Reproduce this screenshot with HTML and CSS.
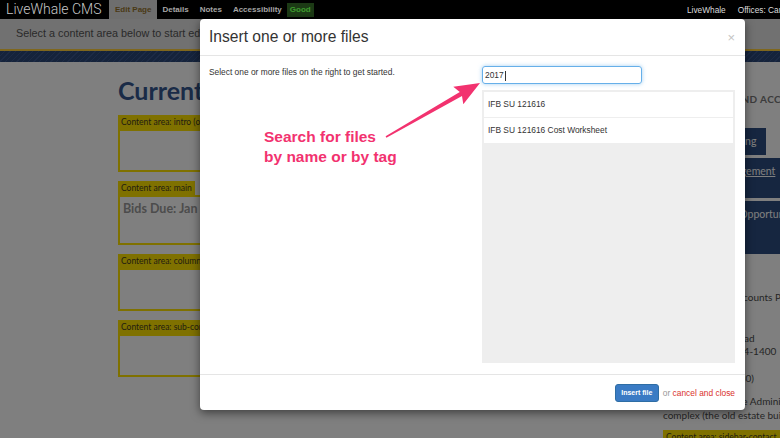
FILE: index.html
```html
<!DOCTYPE html>
<html lang="en">
<head>
    <meta charset="UTF-8">
    <title>Edit Page - LiveWhale CMS</title>
    <link rel="stylesheet" href="styles.css">
</head>
<body>
    <!-- CMS toolbar -->
    <div class="toolbar">
        <span class="brand">LiveWhale CMS</span>
        <nav class="tabs">
            <a class="tab active" href="#">Edit Page</a>
            <a class="tab" href="#">Details</a>
            <a class="tab" href="#">Notes</a>
            <a class="tab" href="#">Accessibility <span class="badge">Good</span></a>
        </nav>
        <div class="toolbar-right">
            <a href="#">LiveWhale</a>
            <a href="#">Offices: Campus Services</a>
        </div>
    </div>

    <!-- Page being edited -->
    <div class="page">
        <div class="hint-bar">Select a content area below to start editing.</div>
        <div class="band"></div>

        <div class="page-body">
            <main class="main-col">
                <h1>Current Bids</h1>
                <div class="areas">
                    <section class="area">
                        <div class="area-label">Content area: intro (optional)</div>
                        <div class="area-body"></div>
                    </section>
                    <section class="area">
                        <div class="area-label">Content area: main</div>
                        <div class="area-body tall"><p>Bids Due: Jan 24, 2017</p></div>
                    </section>
                    <section class="area">
                        <div class="area-label">Content area: column-sidebar</div>
                        <div class="area-body"></div>
                    </section>
                    <section class="area">
                        <div class="area-label">Content area: sub-content</div>
                        <div class="area-body"></div>
                    </section>
                </div>
            </main>

            <aside class="side-col">
                <h2 class="side-title">Purchasing and Accounts</h2>
                <nav class="side-nav">
                    <a class="short" href="#">About Purchasing</a>
                    <a class="current" href="#">Contract Management<br>Policy</a>
                    <a href="#">Upcoming Bid Opportunities<br>and Awards<br>2017</a>
                </nav>
                <p class="side-text">Purchasing and Accounts Payable<br>Room 100<br>Campus Box 17<br>11100 Campus Road<br>Telephone 443-334-1400<br>Mon&ndash;Fri<br>(Mon&ndash;Fri 8:30&ndash;4:30)</p>
                <p class="side-text">Purchasing is in the Administration<br>complex (the old estate building).</p>
                <div class="side-area">Content area: sidebar-contact</div>
            </aside>
        </div>
    </div>

    <div class="backdrop"></div>

    <!-- Insert files dialog -->
    <div class="modal">
        <div class="modal-header">
            <h3 class="modal-title">Insert one or more files</h3>
            <span class="close">&times;</span>
        </div>
        <div class="modal-body">
            <p class="modal-intro">Select one or more files on the right to get started.</p>
            <div class="picker">
                <div class="search">2017<span class="caret"></span></div>
                <ul class="file-list">
                    <li>IFB SU 121616</li>
                    <li>IFB SU 121616 Cost Worksheet</li>
                </ul>
            </div>
        </div>
        <div class="modal-footer">
            <button class="btn-primary" type="button">Insert file</button>
            <span class="or">or <a class="cancel" href="#">cancel and close</a></span>
        </div>
    </div>

    <!-- Annotation -->
    <svg class="callout-arrow" width="780" height="438" viewBox="0 0 780 438">
        <polygon points="385.6,136.3 459.8,92.1 453.3,86.8 480,83 463.3,104.2 462,95.9 386.4,137.7" fill="#f2326f"/>
    </svg>
    <div class="callout-text">Search for files<br>by name or by tag</div>
</body>
</html>
```

FILE: styles.css
```css
/* Base */
* {
    box-sizing: border-box;
}

body {
    margin: 0;
    width: 780px;
    height: 438px;
    overflow: hidden;
    position: relative;
    background: #fff;
    font-family: Lato, "Liberation Sans", sans-serif;
}

a {
    color: inherit;
    text-decoration: none;
}

/* Toolbar */
.toolbar {
    position: relative;
    z-index: 3;
    height: 19px;
    display: flex;
    padding-left: 6px;
    background: #000;
    font-family: "Liberation Sans", Arial, sans-serif;
    white-space: nowrap;
}

.brand {
    margin-right: 8px;
    font-family: Roboto, sans-serif;
    font-weight: 300;
    font-size: 14px;
    line-height: 19px;
    color: #c8c8c8;
}

.tabs {
    display: flex;
}

.tab {
    display: flex;
    align-items: center;
    padding: 0 5.5px;
    font-size: 8px;
    font-weight: bold;
    color: #a6a6a6;
}

.tab.active {
    background: #6e6e6e;
    color: #4a3914;
}

.badge {
    margin-left: 5px;
    padding: 2px 3px;
    line-height: 10px;
    background: #1c3a15;
    color: #3e9a2e;
}

.toolbar-right {
    margin-left: auto;
    width: 93px;
    overflow: hidden;
    display: flex;
    align-items: center;
    gap: 12px;
    font-size: 8.3px;
    color: #dcdcdc;
}

/* Page under the dialog */
.hint-bar {
    height: 30px;
    padding-left: 16px;
    background: #e2e2e2;
    font-family: "Liberation Sans", Arial, sans-serif;
    font-size: 10.8px;
    line-height: 29px;
    color: #555;
}

.band {
    height: 13px;
    border-top: 2px solid #ffcf3a;
    background: repeating-linear-gradient(135deg, #2a4676 0 3px, #38548a 3px 4px);
}

.page-body {
    display: flex;
}

.main-col {
    flex-shrink: 0;
    width: 520px;
    margin-left: 118px;
}

.main-col h1 {
    margin: 13px 0 0;
    font-size: 25px;
    line-height: 30px;
    font-weight: bold;
    color: #34578f;
}

.areas {
    margin-top: 10px;
}

.area {
    margin-bottom: 9px;
}

.area-label {
    width: max-content;
    padding: 0 3px;
    background: #ffe200;
    font-size: 8.5px;
    line-height: 14px;
    color: #454020;
}

.area-body {
    height: 43px;
    border: 2px solid #ffe200;
}

.area-body.tall {
    height: 50px;
    padding: 4px 3px;
}

.area-body p {
    margin: 0;
    font-size: 12.5px;
    font-weight: bold;
    line-height: 15px;
    color: #999;
}

.side-col {
    flex-shrink: 0;
    width: 140px;
    margin-left: 25px;
}

.side-title {
    margin: 30px 0 0;
    font-size: 10px;
    font-weight: bold;
    line-height: 14px;
    letter-spacing: 0.4px;
    text-transform: uppercase;
    color: #787878;
    white-space: nowrap;
}

.side-nav {
    margin-top: 22px;
}

.side-nav a {
    display: block;
    margin-bottom: 3px;
    padding: 7px 10px 7px 9px;
    background: #2c4c80;
    color: #fff;
    font-size: 10.5px;
    line-height: 13px;
    white-space: nowrap;
}

.side-nav a.short {
    width: max-content;
    padding-left: 12px;
}

.side-nav a.current {
    text-decoration: underline;
}

.side-text {
    margin: 37px 0 0;
    font-size: 10px;
    line-height: 13.5px;
    color: #4c4c4c;
    white-space: nowrap;
}

.side-text + .side-text {
    margin-top: 9.5px;
}

.side-area {
    margin-top: 8px;
    height: 14px;
    padding: 0 3px;
    background: #ffe200;
    font-size: 8.5px;
    line-height: 14px;
    color: #454020;
    white-space: nowrap;
}

.backdrop {
    position: absolute;
    top: 19px;
    left: 0;
    right: 0;
    bottom: 0;
    z-index: 2;
    background: rgba(0, 0, 0, 0.5);
}

/* Dialog */
.modal {
    position: absolute;
    left: 200px;
    top: 19px;
    z-index: 4;
    width: 545px;
    height: 391px;
    display: flex;
    flex-direction: column;
    background: #fff;
    border-radius: 4px;
    box-shadow: 0 3px 10px rgba(0, 0, 0, 0.5);
    font-family: "Liberation Sans", Arial, sans-serif;
    color: #333;
}

.modal-header {
    height: 37px;
    display: flex;
    align-items: center;
    justify-content: space-between;
    padding: 0 10px 0 9px;
    border-bottom: 1px solid #e5e5e5;
}

.modal-title {
    margin: 0;
    font-size: 15.6px;
    font-weight: normal;
}

.close {
    font-size: 13px;
    color: #c4c4c4;
}

.modal-body {
    flex: 1;
    display: flex;
    justify-content: space-between;
    padding: 10px 10px 11px 9px;
}

.modal-intro {
    margin: 0;
    font-size: 8.4px;
    line-height: 12px;
}

.picker {
    width: 253px;
    display: flex;
    flex-direction: column;
}

.search {
    width: 160px;
    height: 18px;
    padding: 0 2px;
    border: 1px solid #66afe9;
    border-radius: 3px;
    box-shadow: 0 0 4px rgba(102, 175, 233, 0.6);
    font-size: 8.4px;
    line-height: 16px;
}

.caret {
    display: inline-block;
    width: 1px;
    height: 10px;
    margin-left: 1px;
    background: #333;
    vertical-align: middle;
}

.file-list {
    flex: 1;
    margin: 6px 0 0;
    padding: 2px;
    list-style: none;
    background: #eee;
}

.file-list li {
    height: 25px;
    margin-bottom: 1px;
    padding-left: 4px;
    background: #fff;
    font-size: 8.4px;
    line-height: 25px;
}

.modal-footer {
    height: 36px;
    display: flex;
    align-items: center;
    justify-content: flex-end;
    padding-right: 10px;
    border-top: 1px solid #e5e5e5;
    font-size: 8.4px;
}

.btn-primary {
    height: 18px;
    padding: 0 5.5px;
    border: 1px solid #2e6da4;
    border-radius: 3px;
    background: #3a7bc4;
    color: #fff;
    font-family: inherit;
    font-size: 7px;
    font-weight: bold;
}

.or {
    margin-left: 4px;
    color: #999;
}

.cancel {
    color: #d9322c;
}

/* Annotation */
.callout-arrow {
    position: absolute;
    left: 0;
    top: 0;
    z-index: 5;
}

.callout-text {
    position: absolute;
    left: 264px;
    top: 127px;
    z-index: 5;
    font-family: "Liberation Sans", Arial, sans-serif;
    font-size: 15.5px;
    font-weight: bold;
    line-height: 19.5px;
    color: #f2326f;
}
```
